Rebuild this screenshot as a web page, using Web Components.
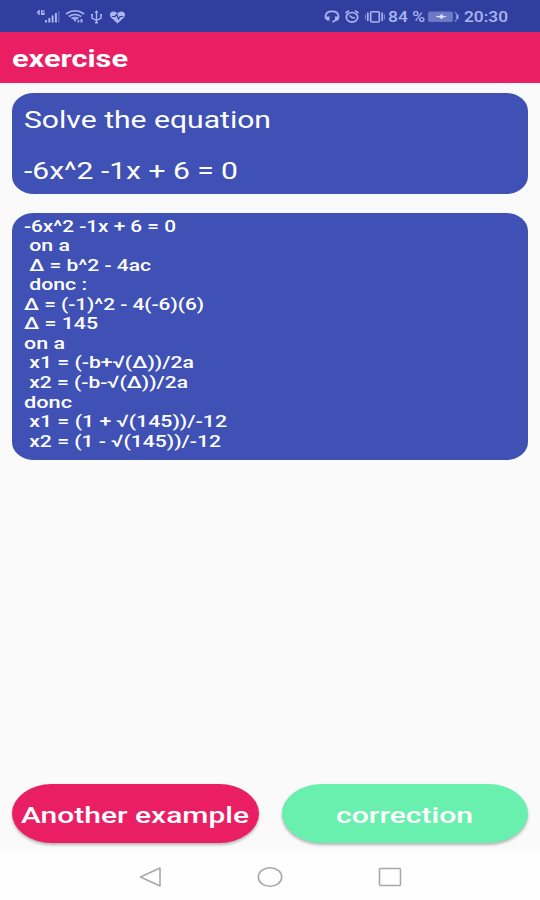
<!DOCTYPE html>
<html lang="fr">
<head>
<meta charset="utf-8">
<title>exercise</title>
<style>
  body {
    margin: 0;
    background: #fafafa;
    font-family: Roboto, "DejaVu Sans", sans-serif;
  }
</style>
</head>
<body>
<exercise-app></exercise-app>

<script>
  // One line of text, stretched horizontally to the given width
  class WideText extends HTMLElement {
    constructor() {
      super();
      this.attachShadow({ mode: "open" });
      this.shadowRoot.innerHTML = `
        <style>
          :host {
            display: block;
            text-align: left;
            white-space: pre;
          }

          span {
            display: inline-block;
            transform-origin: 0 50%;
          }
        </style>
        <span><slot></slot></span>
      `.replace(/>\s+</g, "><").trim();
    }

    connectedCallback() {
      const span = this.shadowRoot.querySelector("span");
      const width = Number(this.getAttribute("width"));
      this.style.width = `${width}px`;
      span.style.transform = `scaleX(${width / span.getBoundingClientRect().width})`;
    }
  }

  class StatusBar extends HTMLElement {
    constructor() {
      super();
      this.attachShadow({ mode: "open" });
      this.shadowRoot.innerHTML = `
        <style>
          :host {
            display: flex;
            justify-content: space-between;
            align-items: center;
            box-sizing: border-box;
            height: 32px;
            padding: 1px 32px 0 36px;
            background: #303f9f;
            color: #aab4f0;
            font-size: 14px;
            font-weight: 500;
          }

          div {
            display: flex;
            align-items: center;
          }

          svg {
            display: block;
            fill: none;
            stroke: currentColor;
          }
        </style>

        <div>
          <svg width="90" height="20" viewBox="36 7 90 20">
            <g stroke="none" fill="currentColor">
              <path d="M38.700 10l-2.500 3.200h2.200V15h1.400v-5zM41 10.200h3.500v1.200h-2v1.800h.8v-1h1.300V15H41z"/>
              <path d="M45 20h2v2.500h-2zM48.300 18h2v4.500h-2zM51.600 15.500h2v7h-2zM54.900 13h2v9.500h-2z"/>
              <path d="M58 11h1.500v11.500H58z" opacity=".35"/>
              <path d="M117.500 23.500l-6.500-6c-2-2.500-1-6 2.500-6 2 0 3.200 1 4 2 .8-1 2-2 4-2 3.500 0 4.500 3.500 2.500 6z"/>
              <path d="M73 18.500h4l-2 3.500zM77.500 20h1.700v2.500h-1.700zM80.500 19h2v3.500h-2z"/>
            </g>
            <path d="M66 14q9-6.500 18 0M68.800 16.500q6.200-4 12.400 0M71.500 18.600q3.500-2 7 0" stroke-width="1.700"/>
            <path d="M96.500 11v12M92 15v3l4.500 2.500 4.500-2.500v-3" stroke-width="1.400"/>
            <path d="M94.700 13l1.800-3 1.800 3zM95 22h3v1.500h-3zM91 14h2v1.500h-2zM100 14h2v1.500h-2z" fill="currentColor" stroke="none"/>
            <path d="M112 16.500h3l1.700-2 1.800 4.500 1.700-2.500h3" stroke="#303f9f" stroke-width="1.200"/>
          </svg>
        </div>

        <div>
          <svg width="64" height="20" viewBox="324 7 64 20">
            <path d="M328 19.500q-3-.5-2.500-3.500.5-4.700 6.500-4.700t6.500 4.700q.2 3.500-2.500 4l-3.500 2" stroke-width="1.700"/>
            <path d="M326 16.500h3.500v4H327zM335 16.500h3.500v3l-1 1H335z" fill="currentColor" stroke="none"/>
            <ellipse cx="352" cy="17.300" rx="5.700" ry="4.800" stroke-width="1.700"/>
            <path d="M345.500 13l3.500-2.300M358.500 13l-3.500-2.300M349.500 15.500l2.700 2.200h2.800" stroke-width="1.500"/>
            <rect x="370.700" y="11.700" width="8.600" height="10.300" rx="1" stroke-width="1.600"/>
            <path d="M367.800 12.500v8.500M382.200 12.500v8.500" stroke-width="1.700"/>
            <path d="M365.500 14.500v5M384.500 14.500v5" stroke-width="1" opacity=".6"/>
          </svg>
          <wide-text width="37">84 %</wide-text>
          <svg width="38" height="20" viewBox="426 7 38 20" style="margin-left: 1px">
            <rect x="428" y="11.500" width="25" height="10.500" rx="2" fill="#6c7ac6" stroke="none"/>
            <path d="M436 16.300l4-.5 1.500-2 1.500 2 4 .8-4 .8-1.500 2-1.500-2-4-.5z" fill="#dce2ff" stroke="none"/>
            <path d="M454.500 12.500q2 0 2 2v4.500q0 2-2 2" stroke="#7482cc" stroke-width="1.300"/>
            <path d="M457.700 14.500v4.500" stroke-width="1.400"/>
          </svg>
          <wide-text width="44">20:30</wide-text>
        </div>
      `;
    }
  }

  class TitleBar extends HTMLElement {
    constructor() {
      super();
      this.attachShadow({ mode: "open" });
      this.shadowRoot.innerHTML = `
        <style>
          :host {
            display: flex;
            align-items: center;
            box-sizing: border-box;
            height: 51px;
            padding: 4px 12px 0;
            background: #e91e63;
            color: #fff;
            font-size: 23px;
            font-weight: 700;
          }
        </style>
        <slot></slot>
      `;
    }
  }

  class TextCard extends HTMLElement {
    constructor() {
      super();
      this.attachShadow({ mode: "open" });
      this.shadowRoot.innerHTML = `
        <style>
          :host {
            display: block;
            box-sizing: border-box;
            padding: 0 12px;
            border-radius: 22px / 18px;
            background: #3f51b5;
            color: #fff;
          }
        </style>
        <slot></slot>
      `;
    }
  }

  class PillButton extends HTMLElement {
    constructor() {
      super();
      this.attachShadow({ mode: "open" });
      this.shadowRoot.innerHTML = `
        <style>
          :host {
            display: block;
          }

          button {
            display: flex;
            justify-content: center;
            align-items: center;
            width: 100%;
            height: 59px;
            padding: 3px 0 0;
            border: none;
            border-radius: 40px / 29.5px;
            background: var(--pill-color);
            box-shadow: 0 2px 3px rgba(0, 0, 0, 0.28);
            color: #fff;
            font: 500 22.5px Roboto, sans-serif;
            cursor: pointer;
          }
        </style>
        <button><slot></slot></button>
      `;
    }
  }

  class NavBar extends HTMLElement {
    constructor() {
      super();
      this.attachShadow({ mode: "open" });
      this.shadowRoot.innerHTML = `
        <style>
          :host {
            display: flex;
            justify-content: center;
            align-items: center;
            gap: 94px;
            height: 47px;
            background: #fefefe;
          }

          svg {
            fill: none;
            stroke: #a8a8a8;
            stroke-width: 1.6;
            stroke-linejoin: round;
          }
        </style>
        <svg width="26" height="22"><path d="M3.500 11L23 2v18z"/></svg>
        <svg width="26" height="22"><ellipse cx="13" cy="11" rx="11.700" ry="9.300"/></svg>
        <svg width="26" height="22"><rect x="2.500" y="2.500" width="21" height="17" rx="1"/></svg>
      `;
    }
  }

  class ExerciseApp extends HTMLElement {
    constructor() {
      super();
      this.attachShadow({ mode: "open" });
      this.shadowRoot.innerHTML = `
        <style>
          :host {
            display: flex;
            flex-direction: column;
            width: 540px;
            height: 900px;
          }

          main {
            flex: 1;
            display: flex;
            flex-direction: column;
            padding: 10px 12px;
          }

          .question {
            height: 101px;
            padding-top: 15px;
            font-size: 23.5px;
            line-height: 25.5px;
          }

          .question wide-text + wide-text {
            margin-top: 25.5px;
          }

          .solution {
            height: 247px;
            margin-top: 19px;
            padding-top: 3.6px;
            font-size: 17px;
            font-weight: 500;
            line-height: 19.55px;
          }

          .buttons {
            display: grid;
            grid-template-columns: 1fr 1fr;
            gap: 23px;
            margin-top: auto;
          }

          .example {
            --pill-color: #e91e63;
          }

          .correction {
            --pill-color: #69f0ae;
          }
        </style>

        <status-bar></status-bar>
        <title-bar><wide-text width="116">exercise</wide-text></title-bar>
        <main>
          <text-card class="question">
            <wide-text width="247">Solve the equation</wide-text>
            <wide-text width="214">-6x^2 -1x + 6 = 0</wide-text>
          </text-card>
          <text-card class="solution">
            <wide-text width="152">-6x^2 -1x + 6 = 0</wide-text>
            <wide-text width="46"> on a</wide-text>
            <wide-text width="127"> Δ = b^2 - 4ac</wide-text>
            <wide-text width="63"> donc :</wide-text>
            <wide-text width="180">Δ = (-1)^2 - 4(-6)(6)</wide-text>
            <wide-text width="74">Δ = 145</wide-text>
            <wide-text width="41">on a</wide-text>
            <wide-text width="170"> x1 = (-b+√(Δ))/2a</wide-text>
            <wide-text width="164"> x2 = (-b-√(Δ))/2a</wide-text>
            <wide-text width="48">donc</wide-text>
            <wide-text width="203"> x1 = (1 + √(145))/-12</wide-text>
            <wide-text width="197"> x2 = (1 - √(145))/-12</wide-text>
          </text-card>
          <div class="buttons">
            <pill-button class="example"><wide-text width="228">Another example</wide-text></pill-button>
            <pill-button class="correction"><wide-text width="137">correction</wide-text></pill-button>
          </div>
        </main>
        <nav-bar></nav-bar>
      `;
    }
  }

  customElements.define("status-bar", StatusBar);
  customElements.define("title-bar", TitleBar);
  customElements.define("text-card", TextCard);
  customElements.define("pill-button", PillButton);
  customElements.define("nav-bar", NavBar);
  customElements.define("exercise-app", ExerciseApp);
  // Defined last: it measures its text inside the finished layout
  customElements.define("wide-text", WideText);
</script>
</body>
</html>
